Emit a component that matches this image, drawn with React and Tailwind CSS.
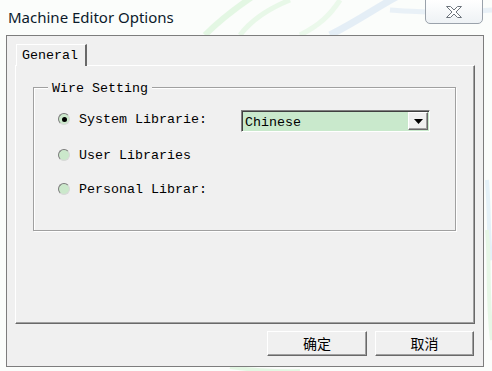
import React from 'react';

const mono = { fontFamily: '"Liberation Mono", "DejaVu Sans Mono", monospace' };

function Radio({ checked, label }) {
  return (
    <div className="flex items-center h-[24px]">
      <span className="relative w-[12px] h-[12px] rounded-full bg-[#cbe8cb] border border-t-[#7a7a7a] border-l-[#7a7a7a] border-r-[#d8d8d8] border-b-[#d8d8d8] flex items-center justify-center">
        {checked && <span className="w-[5px] h-[5px] rounded-full bg-black" />}
      </span>
      <span className="ml-[9px] mt-[2px] text-[13.33px] text-black leading-none" style={mono}>
        {label}
      </span>
    </div>
  );
}

function Button({ children, className = '' }) {
  return (
    <button
      className={`h-[25px] border border-t-white border-l-white border-r-[#696969] border-b-[#696969] shadow-[inset_-1px_-1px_0_#a0a0a0] bg-[#f0f0f0] text-[14px] text-black flex items-center justify-center ${className}`}
      style={{ fontFamily: '"Noto Sans CJK SC", "Noto Sans", sans-serif' }}
    >
      {children}
    </button>
  );
}

export default function App() {
  return (
    <div className="relative w-[492px] h-[371px] overflow-hidden bg-[#fbfdfb]">
      {/* aero glass swirls */}
      <svg className="absolute inset-0 opacity-50" width="492" height="371" viewBox="0 0 492 371">
        <path d="M205 35 C220 20 240 5 255 -5" stroke="#cdf3cd" strokeWidth="6" fill="none" />
        <path d="M240 35 C250 22 265 10 290 0" stroke="#d6f5d6" strokeWidth="5" fill="none" />
        <path d="M300 35 C320 25 330 15 340 0" stroke="#dcf6dc" strokeWidth="5" fill="none" />
        <path d="M330 35 C360 20 380 5 400 -5" stroke="#cfe0f3" strokeWidth="7" fill="none" />
        <path d="M390 10 C420 12 450 14 492 10" stroke="#d9e6f5" strokeWidth="5" fill="none" />
        <path d="M487 180 C490 220 488 250 492 260" stroke="#cfe6f7" strokeWidth="4" fill="none" />
        <path d="M487 230 C490 260 487 300 492 340" stroke="#d3f2d3" strokeWidth="4" fill="none" />
        <path d="M230 367 C260 371 280 372 300 371" stroke="#cdf3cd" strokeWidth="4" fill="none" />
      </svg>

      {/* title bar */}
      <div className="relative h-[35px] flex items-center pl-[8px]">
        <span
          className="text-[15px] text-[#0b1a2b] leading-none -mt-[1px]"
          style={{ fontFamily: '"Noto Sans", "Open Sans", sans-serif' }}
        >
          Machine Editor Options
        </span>
        <div className="absolute left-[425px] top-[-1px] w-[58px] h-[25px] rounded-b-[5px] border border-[#9aa2ab] bg-gradient-to-b from-[#ffffff] to-[#eef2f5] flex items-center justify-center">
          <svg width="18" height="14" viewBox="0 0 18 14">
            <path
              d="M1.5 1.5 H5.5 L9 5 L12.5 1.5 H16.5 L11 7 L16.5 12.5 H12.5 L9 9 L5.5 12.5 H1.5 L7 7 Z"
              fill="#ffffff"
              stroke="#6d747c"
              strokeWidth="1"
              strokeLinejoin="round"
            />
          </svg>
        </div>
      </div>

      {/* client area */}
      <div className="relative ml-[6px] w-[478px] h-[332px] border border-[#7d7d7d] bg-[#f0f0f0] pt-[8px] pl-[8px]">
        {/* tab */}
        <div className="relative z-10 ml-[1px] -mb-[1px] w-[71px] h-[22px] bg-[#f0f0f0] border-t border-l border-white border-r-2 border-r-[#696969] flex items-center pl-[5px]">
          <span className="text-[13.33px] text-black leading-none mt-[1px]" style={mono}>General</span>
        </div>
        {/* tab panel */}
        <div className="w-[460px] h-[259px] border border-t-white border-l-white border-r-[#696969] border-b-[#696969] shadow-[inset_-1px_-1px_0_#a0a0a0] pt-[21px] pl-[17px]">
          {/* group box */}
          <div className="relative w-[423px] h-[144px] border border-[#a0a0a0] shadow-[1px_1px_0_#ffffff,inset_1px_1px_0_#ffffff] pt-[19px] pl-[24px]">
            <span
              className="absolute left-[14px] top-[-7px] px-[4px] bg-[#f0f0f0] text-[13.33px] text-black leading-[16px]"
              style={mono}
            >
              Wire Setting
            </span>
            <div className="flex items-start">
              <div className="w-[183px]">
                <Radio checked label="System Librarie:" />
              </div>
              <div className="mt-[3px] w-[189px] h-[22px] bg-[#c9e9cc] border border-t-[#808080] border-l-[#808080] border-r-white border-b-white shadow-[inset_1px_1px_0_#404040] flex items-center">
                <span className="ml-[3px] mt-[3px] flex-1 text-[13.33px] text-black leading-none" style={mono}>
                  Chinese
                </span>
                <div className="mr-[1px] w-[20px] h-[18px] bg-[#f0f0f0] border border-t-white border-l-white border-r-[#696969] border-b-[#696969] shadow-[inset_-1px_-1px_0_#a0a0a0] flex items-center justify-center">
                  <svg width="9" height="5" viewBox="0 0 9 5">
                    <path d="M0 0 H9 L4.5 5 Z" fill="#000" />
                  </svg>
                </div>
              </div>
            </div>
            <div className="mt-[11px]">
              <Radio label="User Libraries" />
            </div>
            <div className="mt-[10px]">
              <Radio label="Personal Librar:" />
            </div>
          </div>
        </div>
        {/* buttons */}
        <div className="flex justify-end gap-[8px] mt-[7px] pr-[9px]">
          <Button className="w-[100px]">确定</Button>
          <Button className="w-[99px]">取消</Button>
        </div>
      </div>
    </div>
  );
}
